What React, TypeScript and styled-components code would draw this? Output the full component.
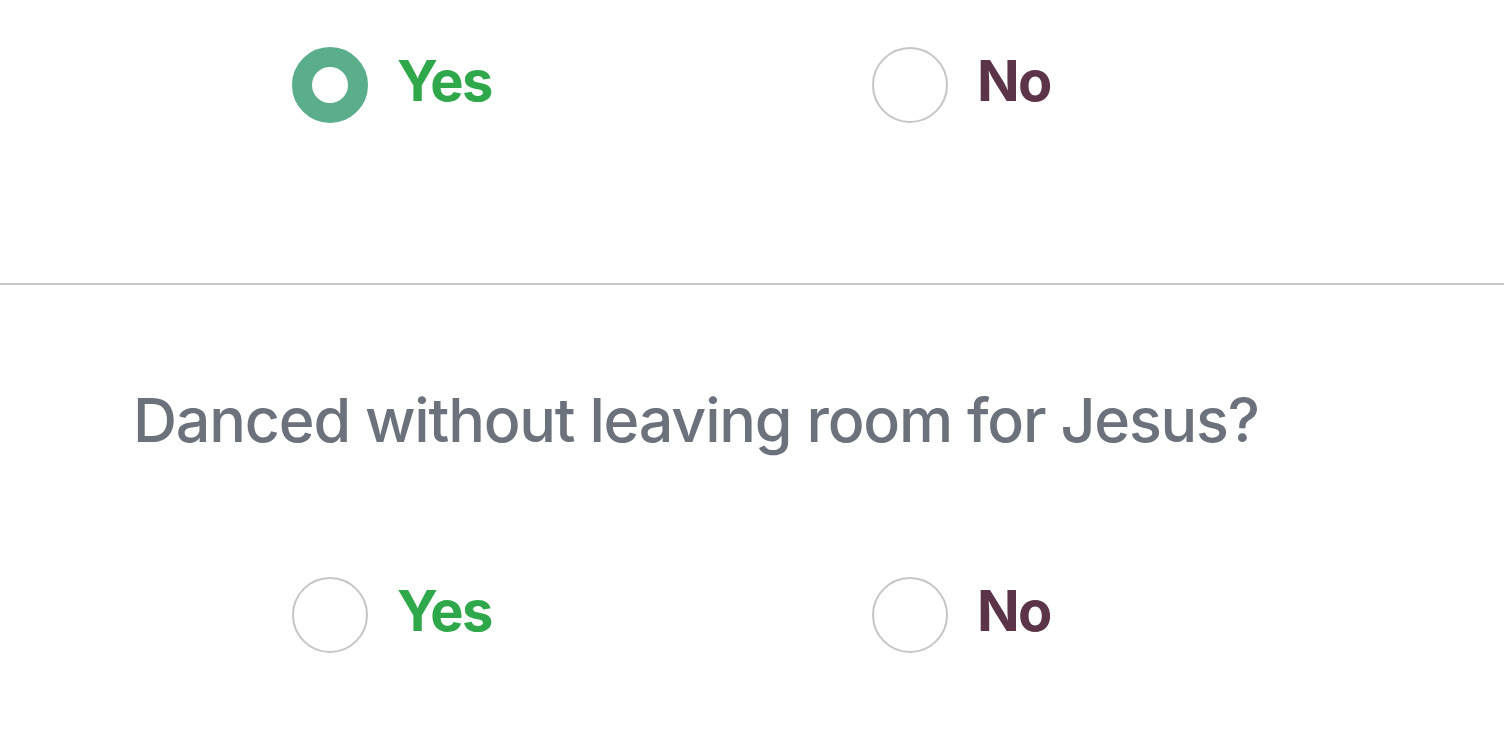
import React, { useState } from "react";
import styled, { createGlobalStyle } from "styled-components";

const Global = createGlobalStyle`
  html, body { margin: 0; padding: 0; background: #ffffff; }
  body { font-family: Inter, "Noto Sans", "Liberation Sans", sans-serif; overflow: hidden; }
`;

const Page = styled.div`
  width: 1504px;
  height: 741px;
  overflow: hidden;
  display: flex;
  flex-direction: column;
`;

const Section = styled.section<{ $pt: number; $pb: number }>`
  padding: ${(p) => p.$pt}px 0 ${(p) => p.$pb}px 133px;
  display: flex;
  flex-direction: column;
`;

const Divider = styled.hr`
  margin: 0;
  border: none;
  height: 2px;
  background: #c9c9c9;
  width: 100%;
`;

const Question = styled.h2`
  margin: 0 0 119px 0;
  font-size: 61px;
  line-height: 76px;
  font-weight: 500;
  color: #6b727c;
  letter-spacing: -1.2px;
`;

const Options = styled.div`
  display: grid;
  grid-template-columns: 580px 580px;
  padding-left: 159px;
`;

const Option = styled.label`
  display: flex;
  align-items: center;
  gap: 29px;
  cursor: pointer;
`;

const Circle = styled.span<{ $checked: boolean }>`
  box-sizing: border-box;
  width: 76px;
  height: 76px;
  border-radius: 50%;
  flex: none;
  border: ${(p) => (p.$checked ? "20px solid #5aae8b" : "2px solid #c6c6c6")};
  background: #fff;
`;

const Label = styled.span<{ $color: string }>`
  font-size: 56px;
  line-height: 68px;
  padding-bottom: 8px;
  font-weight: 700;
  color: ${(p) => p.$color};
  letter-spacing: -1.6px;
`;

type Answer = "yes" | "no" | null;

function YesNo({ value, onChange }: { value: Answer; onChange: (a: Answer) => void }) {
  return (
    <Options>
      <Option onClick={() => onChange("yes")}>
        <Circle $checked={value === "yes"} />
        <Label $color="#2fa84b">Yes</Label>
      </Option>
      <Option onClick={() => onChange("no")}>
        <Circle $checked={value === "no"} />
        <Label $color="#5c3449">No</Label>
      </Option>
    </Options>
  );
}

export default function App() {
  const [a1, setA1] = useState<Answer>("yes");
  const [a2, setA2] = useState<Answer>(null);
  return (
    <Page>
      <Global />
      <Section $pt={47} $pb={160}>
        <YesNo value={a1} onChange={setA1} />
      </Section>
      <Divider />
      <Section $pt={97} $pb={0}>
        <Question>Danced without leaving room for Jesus?</Question>
        <YesNo value={a2} onChange={setA2} />
      </Section>
    </Page>
  );
}
